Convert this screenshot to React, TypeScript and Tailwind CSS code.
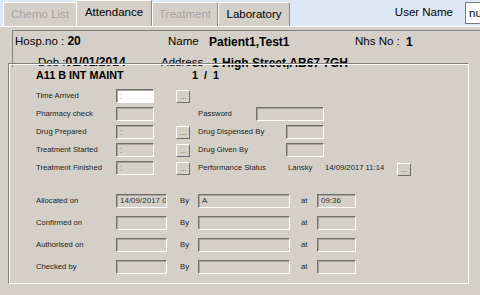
import React from "react";

const Field = ({ w, white, children }: { w: string; white?: boolean; children?: React.ReactNode }) => (
  <div
    className={`${w} h-[14px] shrink-0 overflow-hidden whitespace-nowrap border border-t-[#6f6f6f] border-l-[#6f6f6f] border-b-white border-r-white shadow-[inset_1px_1px_0_#a8a49c] pl-[3px] text-[8px] leading-[12px] text-[#333] ${white ? "bg-white" : "bg-[#d4d0c8]"}`}
  >
    {children}
  </div>
);

const Dots = () => (
  <div className="w-[14px] h-[13px] shrink-0 bg-[#d4d0c8] border border-t-white border-l-white border-b-[#6f6f6f] border-r-[#6f6f6f] flex items-end justify-center pb-[1px]">
    <span className="text-[8px] leading-[8px] text-[#666]">...</span>
  </div>
);

const Label = ({ w, children }: { w: string; children: React.ReactNode }) => (
  <div className={`${w} shrink-0 whitespace-nowrap text-[7.7px] text-[#222]`}>{children}</div>
);

const Colon = () => <span className="text-[9px] text-[#8a8a8a]">:</span>;

export default function App() {
  return (
    <div className="w-[480px] h-[295px] overflow-hidden bg-[#d4d0c8] font-['Liberation_Sans',Arial,sans-serif] text-black">
      {/* tab bar */}
      <div className="h-[26px] bg-[#dde7f5] flex items-end">
        <div className="ml-[3px] w-[73px] h-[24px] shrink-0 bg-[#d4d0c8] border-l border-t border-white flex items-center justify-center text-[11.5px] text-[#a3a3a3]">
          Chemo List
        </div>
        <div className="w-[76px] h-[26px] shrink-0 bg-[#d4d0c8] border-l border-t border-white border-r border-r-[#8a8a8a] flex items-center justify-center text-[11.5px] pb-[2px]">
          Attendance
        </div>
        <div className="w-[66px] h-[24px] shrink-0 bg-[#d4d0c8] border-l border-t border-white border-r border-r-[#8a8a8a] flex items-center justify-center text-[11.5px] text-[#a3a3a3]">
          Treatment
        </div>
        <div className="w-[72px] h-[24px] shrink-0 bg-[#d4d0c8] border-l border-t border-white border-r border-r-[#8a8a8a] flex items-center justify-center text-[11.5px]">
          Laboratory
        </div>
        <div className="ml-auto self-center text-[11.5px] mr-[12px] whitespace-nowrap">User Name</div>
        <div className="w-[15px] h-[22px] shrink-0 self-center bg-white border border-r-0 border-[#7a7a7a] overflow-hidden whitespace-nowrap pl-[3px] text-[11.5px] leading-[20px]">
          nu
        </div>
      </div>

      <div className="border-t border-white">
        {/* header panel */}
        <div className="ml-[12px] mt-[3px] h-[37px] border-t border-l border-[#808080] flex flex-col">
          <div className="h-[21px] shrink-0 flex items-center whitespace-nowrap">
            <div className="w-[155px] pl-[2px] text-[11.5px]">
              Hosp.no : <span className="font-bold text-[12px]">20</span>
            </div>
            <div className="w-[187px] flex items-center text-[11.5px]">
              <span className="w-[41px]">Name</span>
              <span className="font-bold text-[12px]">Patient1,Test1</span>
            </div>
            <div className="flex items-center text-[11.5px]">
              <span className="w-[51px]">Nhs No :</span>
              <span className="font-bold text-[12px]">1</span>
            </div>
          </div>
          <div className="h-[21px] shrink-0 flex items-center whitespace-nowrap">
            <div className="w-[148px] pl-[25px] text-[11.5px]">
              Dob :<span className="font-bold text-[12px]">01/01/2014</span>
            </div>
            <div className="flex items-center text-[11.5px]">
              <span className="w-[51px]">Address</span>
              <span className="font-bold text-[12px]">1 High Street,AB67 7GH</span>
            </div>
          </div>
        </div>

        {/* group box */}
        <div className="relative ml-[8px] -mt-[4px] w-[461px] h-[221px] border border-t-[#808080] border-l-[#808080] border-b-white border-r-white shadow-[inset_1px_1px_0_white] pl-[27px]">
          <div className="mt-[4px] h-[14px] flex items-center whitespace-nowrap font-bold text-[10.8px]">
            <span className="w-[156px]">A11 B INT MAINT</span>
            <span className="[word-spacing:3px]">1 / 1</span>
          </div>

          <div className="mt-[7px] flex flex-col gap-[4px]">
            <div className="h-[14px] flex items-center">
              <Label w="w-[80px]">Time Arrived</Label>
              <Field w="w-[38px]" white>
                <Colon />
              </Field>
              <div className="w-[22px] shrink-0" />
              <Dots />
            </div>
            <div className="h-[14px] flex items-center">
              <Label w="w-[80px]">Pharmacy check</Label>
              <Field w="w-[38px]" />
              <div className="w-[44px] shrink-0" />
              <Label w="w-[58px]">Password</Label>
              <Field w="w-[68px]" />
            </div>
            <div className="h-[14px] flex items-center">
              <Label w="w-[80px]">Drug Prepared</Label>
              <Field w="w-[38px]">
                <Colon />
              </Field>
              <div className="w-[22px] shrink-0" />
              <Dots />
              <div className="w-[8px] shrink-0" />
              <Label w="w-[88px]">Drug Dispensed By</Label>
              <Field w="w-[38px]" />
            </div>
            <div className="h-[14px] flex items-center">
              <Label w="w-[80px]">Treatment Started</Label>
              <Field w="w-[38px]">
                <Colon />
              </Field>
              <div className="w-[22px] shrink-0" />
              <Dots />
              <div className="w-[8px] shrink-0" />
              <Label w="w-[88px]">Drug Given By</Label>
              <Field w="w-[38px]" />
            </div>
            <div className="h-[14px] flex items-center">
              <Label w="w-[80px]">Treatment Finished</Label>
              <Field w="w-[38px]">
                <Colon />
              </Field>
              <div className="w-[22px] shrink-0" />
              <Dots />
              <div className="w-[8px] shrink-0" />
              <Label w="w-[90px]">Performance Status</Label>
              <div className="w-[37px] shrink-0">
                <div className="w-[33px] overflow-hidden whitespace-nowrap text-[7.7px] text-[#222]">Lansky</div>
              </div>
              <Label w="w-[72px]">14/09/2017 11:14</Label>
              <div className="mt-[3px]">
                <Dots />
              </div>
            </div>
          </div>

          <div className="mt-[19px] flex flex-col gap-[8px]">
            {[
              { l: "Allocated on", d: "14/09/2017 09:36", by: "A", at: "09:36" },
              { l: "Confirmed on", d: "", by: "", at: "" },
              { l: "Authorised on", d: "", by: "", at: "" },
              { l: "Checked by", d: "", by: "", at: "" },
            ].map((r) => (
              <div key={r.l} className="h-[14px] flex items-center">
                <Label w="w-[80px]">{r.l}</Label>
                <Field w="w-[51px]">{r.d}</Field>
                <div className="w-[31px] shrink-0 pl-[13px] text-[7.7px] text-[#222]">By</div>
                <Field w="w-[92px]">{r.by}</Field>
                <div className="w-[27px] shrink-0 pl-[11px] text-[7.7px] text-[#222]">at</div>
                <Field w="w-[39px]">{r.at}</Field>
              </div>
            ))}
          </div>
        </div>
      </div>
    </div>
  );
}
